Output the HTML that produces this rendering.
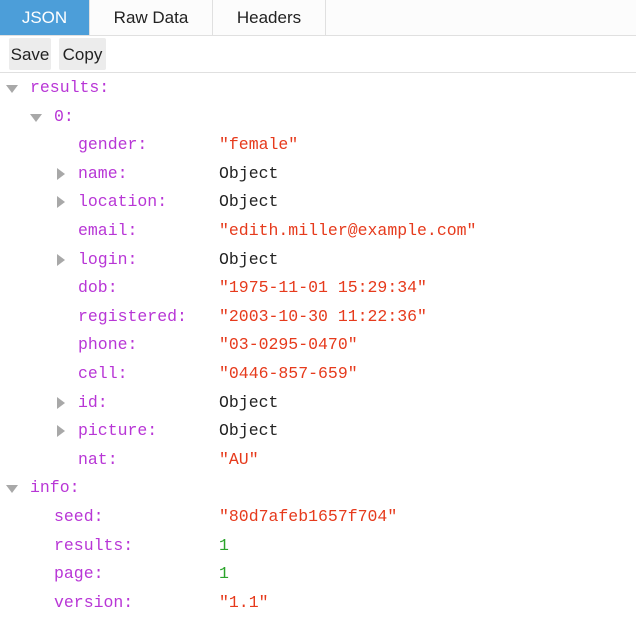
<!DOCTYPE html>
<html><head><style>
body{margin:0;width:636px;height:623px;background:#fff;overflow:hidden;font-family:"Liberation Sans",sans-serif}
.tabs{position:absolute;top:0;left:0;width:636px;height:35px;background:#fcfcfc;border-bottom:1px solid #e0e0e0}
.tab{position:absolute;top:0;height:35px;line-height:36px;text-align:center;font-size:17px;color:#222;border-right:1px solid #e0e0e0}
.tb{position:absolute;top:36px;left:0;width:636px;height:36px;border-bottom:1px solid #e0e0e0;background:#fff}
.btn{position:absolute;top:2px;height:32px;line-height:34px;background:#ececec;border-radius:2px;font-size:17px;color:#222;text-align:center}
.r{position:absolute;left:0;height:28.6px;line-height:28.6px;font-family:"Liberation Mono",monospace;font-size:16.5px;white-space:pre}
.k{position:absolute;color:#b836d6}
.s{position:absolute;left:219px;color:#e63a1c}
.o{position:absolute;left:219px;color:#222}
.n{position:absolute;left:219px;color:#2aa42a}
.tw{position:absolute;width:0;height:0;border-left:6px solid transparent;border-right:6px solid transparent;border-top:8px solid #a8a8a8;top:11px}
.tr{position:absolute;width:0;height:0;border-top:6px solid transparent;border-bottom:6px solid transparent;border-left:8px solid #a8a8a8;top:8px}
</style></head><body>
<div class="tabs">
<div class="tab" style="left:0;width:89px;background:#4c9ed9;color:#fff">JSON</div>
<div class="tab" style="left:90px;width:122px">Raw Data</div>
<div class="tab" style="left:213px;width:112px">Headers</div>
</div>
<div class="tb"><div class="btn" style="left:9px;width:42px">Save</div><div class="btn" style="left:59px;width:47px">Copy</div></div>

<div class="r" style="top:74px"><span class="tw" style="left:6px"></span><span class="k" style="left:30px">results:</span></div>
<div class="r" style="top:102.6px"><span class="tw" style="left:30px"></span><span class="k" style="left:54px">0:</span></div>
<div class="r" style="top:131.2px"><span class="k" style="left:78px">gender:</span><span class="s">"female"</span></div>
<div class="r" style="top:159.8px"><span class="tr" style="left:57px"></span><span class="k" style="left:78px">name:</span><span class="o">Object</span></div>
<div class="r" style="top:188.4px"><span class="tr" style="left:57px"></span><span class="k" style="left:78px">location:</span><span class="o">Object</span></div>
<div class="r" style="top:217px"><span class="k" style="left:78px">email:</span><span class="s">"edith.miller@example.com"</span></div>
<div class="r" style="top:245.6px"><span class="tr" style="left:57px"></span><span class="k" style="left:78px">login:</span><span class="o">Object</span></div>
<div class="r" style="top:274.2px"><span class="k" style="left:78px">dob:</span><span class="s">"1975-11-01 15:29:34"</span></div>
<div class="r" style="top:302.8px"><span class="k" style="left:78px">registered:</span><span class="s">"2003-10-30 11:22:36"</span></div>
<div class="r" style="top:331.4px"><span class="k" style="left:78px">phone:</span><span class="s">"03-0295-0470"</span></div>
<div class="r" style="top:360px"><span class="k" style="left:78px">cell:</span><span class="s">"0446-857-659"</span></div>
<div class="r" style="top:388.6px"><span class="tr" style="left:57px"></span><span class="k" style="left:78px">id:</span><span class="o">Object</span></div>
<div class="r" style="top:417.2px"><span class="tr" style="left:57px"></span><span class="k" style="left:78px">picture:</span><span class="o">Object</span></div>
<div class="r" style="top:445.8px"><span class="k" style="left:78px">nat:</span><span class="s">"AU"</span></div>
<div class="r" style="top:474.4px"><span class="tw" style="left:6px"></span><span class="k" style="left:30px">info:</span></div>
<div class="r" style="top:503px"><span class="k" style="left:54px">seed:</span><span class="s">"80d7afeb1657f704"</span></div>
<div class="r" style="top:531.6px"><span class="k" style="left:54px">results:</span><span class="n">1</span></div>
<div class="r" style="top:560.2px"><span class="k" style="left:54px">page:</span><span class="n">1</span></div>
<div class="r" style="top:588.8px"><span class="k" style="left:54px">version:</span><span class="s">"1.1"</span></div>
</body></html>
